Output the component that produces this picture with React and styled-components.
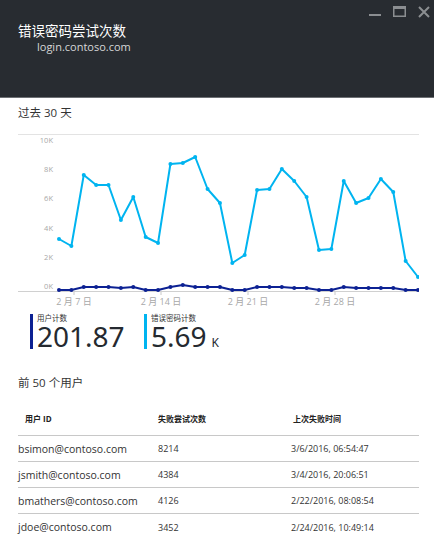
import React from "react";
import styled, { createGlobalStyle } from "styled-components";

const GlobalStyle = createGlobalStyle`
  body {
    margin: 0;
    background: #ffffff;
    font-family: "Open Sans", "Noto Sans CJK SC", sans-serif;
  }
`;

const Blade = styled.div`
  width: 434px;
  height: 537px;
  overflow: hidden;
  display: flex;
  flex-direction: column;
  background: #ffffff;
  & > * {
    flex-shrink: 0;
  }
`;

const Header = styled.div`
  height: 98px;
  background: #282c31;
  border-bottom: 1px solid #6d7074;
  position: relative;
  padding: 22px 0 0 18px;
  box-sizing: border-box;
`;

const Title = styled.div`
  color: #ffffff;
  font-size: 13.5px;
  line-height: 18px;
`;

const Subtitle = styled.div`
  color: #d6d7d8;
  font-size: 11px;
  line-height: 14px;
  padding-left: 19px;
`;

const WindowButtons = styled.div`
  position: absolute;
  top: 6px;
  right: 4px;
  display: flex;
  gap: 12px;
  align-items: center;
`;

const Body = styled.div`
  padding: 0 15px 0 18px;
  display: flex;
  flex-direction: column;
`;

const SectionTitle = styled.div`
  font-size: 11.5px;
  color: #333;
  line-height: 16px;
  padding-top: ${(p) => p.top}px;
  padding-bottom: ${(p) => p.bottom}px;
`;

const Chart = styled.svg`
  display: block;
  width: 401px;
  height: 178px;
  flex-shrink: 0;
`;

const Legend = styled.div`
  display: flex;
  padding-left: 12px;
  margin-top: 2px;
`;

const LegendItem = styled.div`
  display: flex;
  flex-direction: column;
  border-left: 3px solid ${(p) => p.color};
  padding-left: 4px;
  width: ${(p) => p.width}px;
  box-sizing: border-box;
  height: 35px;
`;

const LegendLabel = styled.div`
  font-size: 7.5px;
  line-height: 9px;
  color: #333;
`;

const LegendValue = styled.div`
  font-size: 28px;
  line-height: 26px;
  color: #252a30;
  font-family: "Noto Sans", sans-serif;
  display: flex;
  align-items: baseline;
`;

const Unit = styled.span`
  font-size: 12px;
  line-height: 12px;
  margin-left: 5px;
`;

const Table = styled.div`
  display: flex;
  flex-direction: column;
`;

const Row = styled.div`
  display: grid;
  grid-template-columns: 140px 133px 1fr;
  align-items: center;
  box-sizing: border-box;
  height: ${(p) => (p.head ? 35 : 26)}px;
  border-bottom: 1px solid #c8c8c8;
  &:last-child {
    border-bottom: none;
  }
`;

const HeadCell = styled.div`
  font-size: 8px;
  font-weight: bold;
  color: #222;
  padding-left: ${(p) => p.indent || 0}px;
`;

const Cell = styled.div`
  font-size: ${(p) => (p.big ? 10.5 : 9)}px;
  color: #333;
`;

const light = [239, 246, 175, 185, 185, 220, 197, 237, 243, 164, 163, 157, 189, 203, 263, 255, 190, 189, 169, 181, 197, 250, 249, 181, 203, 198, 179, 192, 261, 277];
const dark = [290, 290, 287, 287, 287, 288, 287, 290, 290, 287, 285, 287, 287, 287, 290, 290, 287, 287, 287, 288, 288, 290, 290, 287, 288, 288, 288, 288, 290, 290];

const px = (i) => 59 + i * 12.38 - 18;
const py = (v) => v - 134;

const Series = ({ data, color }) => (
  <g>
    <polyline
      points={data.map((v, i) => `${px(i)},${py(v)}`).join(" ")}
      fill="none"
      stroke={color}
      strokeWidth="2"
      strokeLinejoin="round"
    />
    {data.map((v, i) => (
      <circle key={i} cx={px(i)} cy={py(v)} r="2" fill={color} />
    ))}
  </g>
);

const yLabels = ["10K", "8K", "6K", "4K", "2K", "0K"];
const xLabels = [
  { x: 74, t: "2 月 7 日" },
  { x: 161, t: "2 月 14 日" },
  { x: 248, t: "2 月 21 日" },
  { x: 335, t: "2 月 28 日" },
];

const users = [
  ["bsimon@contoso.com", "8214", "3/6/2016, 06:54:47"],
  ["jsmith@contoso.com", "4384", "3/4/2016, 20:06:51"],
  ["bmathers@contoso.com", "4126", "2/22/2016, 08:08:54"],
  ["jdoe@contoso.com", "3452", "2/24/2016, 10:49:14"],
];

const WinIcons = () => (
  <WindowButtons>
    <svg width="12" height="12" viewBox="0 0 12 12">
      <rect x="0" y="8" width="12" height="2" fill="#8b8e91" />
    </svg>
    <svg width="13" height="12" viewBox="0 0 13 12">
      <rect x="0.75" y="0.75" width="11.5" height="9.5" fill="none" stroke="#8b8e91" strokeWidth="1.5" />
      <rect x="0" y="0" width="13" height="3" fill="#8b8e91" />
    </svg>
    <svg width="12" height="12" viewBox="0 0 12 12">
      <path d="M1 1 L11 11 M11 1 L1 11" stroke="#8b8e91" strokeWidth="2" />
    </svg>
  </WindowButtons>
);

export default function App() {
  return (
    <Blade>
      <GlobalStyle />
      <Header>
        <Title>错误密码尝试次数</Title>
        <Subtitle>login.contoso.com</Subtitle>
        <WinIcons />
      </Header>
      <Body>
        <SectionTitle top={7} bottom={13}>过去 30 天</SectionTitle>
        <Chart viewBox="0 0 401 178">
          <line x1="0" y1="0.5" x2="401" y2="0.5" stroke="#e3e3e3" />
          <line x1="0" y1="157.5" x2="401" y2="157.5" stroke="#d0d0d0" />
          {yLabels.map((l, i) => (
            <text
              key={l}
              x="35"
              y={i * 29.2 + 9}
              textAnchor="end"
              fontSize="7.5"
              fill="#a8a8a8"
              fontFamily="Open Sans, sans-serif"
            >
              {l}
            </text>
          ))}
          {xLabels.map((l) => (
            <g key={l.t}>
              <line x1={l.x - 18} y1="158" x2={l.x - 18} y2="161" stroke="#c8c8c8" />
              <text
                x={l.x - 18}
                y="171"
                textAnchor="middle"
                fontSize="9"
                fill="#a8a8a8"
                fontFamily="Open Sans, Noto Sans CJK SC, sans-serif"
              >
                {l.t}
              </text>
            </g>
          ))}
          <Series data={light} color="#00b4f0" />
          <Series data={dark} color="#0c2193" />
        </Chart>
        <Legend>
          <LegendItem color="#0c2193" width={114}>
            <LegendLabel>用户计数</LegendLabel>
            <LegendValue>201.87</LegendValue>
          </LegendItem>
          <LegendItem color="#00b4f0" width={120}>
            <LegendLabel>错误密码计数</LegendLabel>
            <LegendValue>
              5.69<Unit>K</Unit>
            </LegendValue>
          </LegendItem>
        </Legend>
        <SectionTitle top={26} bottom={10}>前 50 个用户</SectionTitle>
        <Table>
          <Row head>
            <HeadCell indent={7}>用户 ID</HeadCell>
            <HeadCell>失败尝试次数</HeadCell>
            <HeadCell indent={2}>上次失败时间</HeadCell>
          </Row>
          {users.map((u) => (
            <Row key={u[0]}>
              <Cell big>{u[0]}</Cell>
              <Cell>{u[1]}</Cell>
              <Cell>{u[2]}</Cell>
            </Row>
          ))}
        </Table>
      </Body>
    </Blade>
  );
}
